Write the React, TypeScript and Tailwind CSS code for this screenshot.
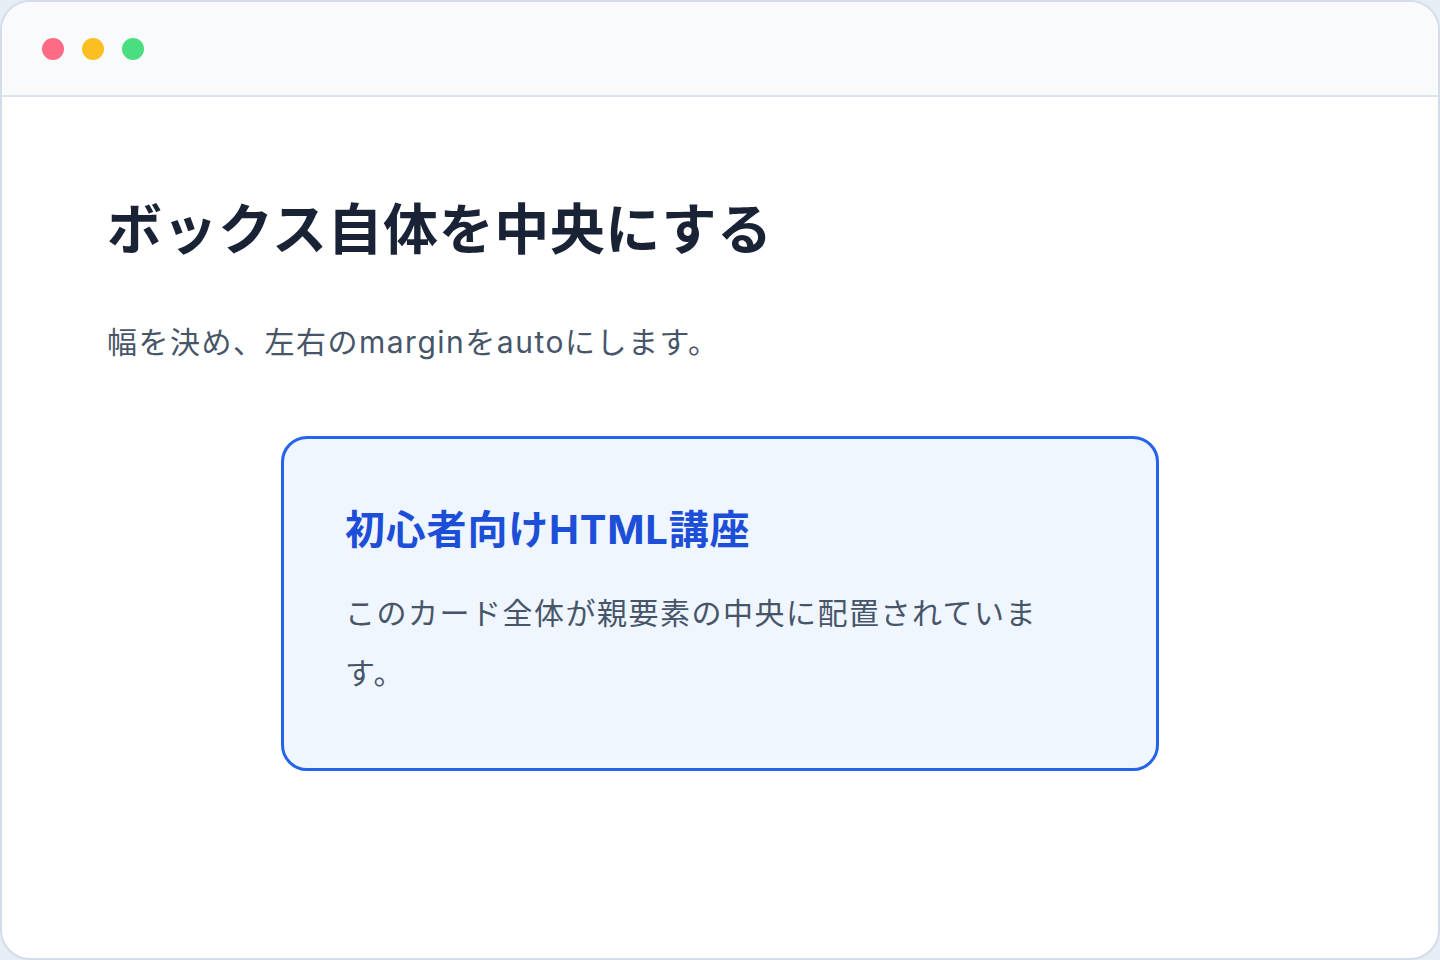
import React from "react";

/**
 * Browser-window mockup showing a card centred with margin: auto.
 */
function WindowDots() {
  return (
    <div className="flex items-center gap-[18px]">
      <span className="block w-[22px] h-[22px] rounded-full bg-[#ff6b85]" />
      <span className="block w-[22px] h-[22px] rounded-full bg-[#fbbf24]" />
      <span className="block w-[22px] h-[22px] rounded-full bg-[#4ade80]" />
    </div>
  );
}

export default function App() {
  return (
    <div
      className="w-[1440px] h-[960px] bg-[#e6edf7]"
      style={{ fontFamily: 'Inter, "Noto Sans CJK JP", sans-serif' }}
    >
      <div className="h-full flex flex-col bg-white border-2 border-[#d3dce8] rounded-[30px] overflow-hidden">
        {/* Title bar */}
        <div className="h-[95px] shrink-0 flex items-center pl-[40px] bg-[#f8fafc] border-b-2 border-[#dce4ee]">
          <WindowDots />
        </div>

        {/* Content */}
        <main className="flex-1 pt-[99px] px-[105px]">
          <h1 className="text-[55px] leading-[1.2] font-bold tracking-[0.01em] text-[#1a2335]">
            ボックス自体を中央にする
          </h1>
          <p className="mt-[56px] text-[30px] leading-[1.6] tracking-[0.05em] text-[#475569]">
            幅を決め、左右のmarginをautoにします。
          </p>

          {/* Centred card */}
          <div className="mt-[70px] mx-auto w-[878px] rounded-[26px] border-[3px] border-[#2563eb] bg-[#eff6ff] px-[61px] pt-[63px] pb-[65px]">
            <h2 className="text-[40px] leading-[1.4] font-bold tracking-[0.02em] text-[#1d4ed8]">
              初心者向けHTML講座
            </h2>
            <p className="mt-[25px] text-[30px] leading-[2] tracking-[0.05em] text-[#475569]">
              このカード全体が親要素の中央に配置されています。
            </p>
          </div>
        </main>
      </div>
    </div>
  );
}
